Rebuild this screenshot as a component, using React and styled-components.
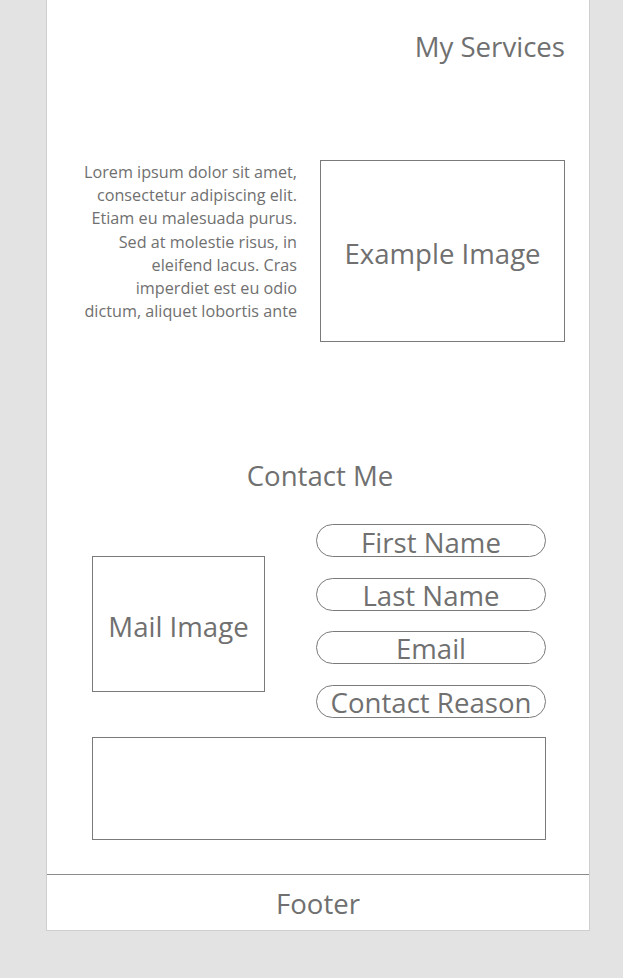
import React from "react";
import styled, { createGlobalStyle } from "styled-components";

const GlobalStyle = createGlobalStyle`
  html, body {
    margin: 0;
    padding: 0;
    background: #e3e3e3;
  }
  body {
    font-family: "Open Sans", "Noto Sans", sans-serif;
    color: #707070;
  }
`;

const Page = styled.div`
  width: 544px;
  margin-left: 46px;
  box-sizing: border-box;
  background: #fff;
  border: 1px solid #cfcfcf;
  border-top: none;
`;

const Header = styled.header`
  display: flex;
  justify-content: flex-end;
  padding: 27px 24px 0 0;
`;

const Heading = styled.h2`
  margin: 0;
  padding-left: ${(p) => p.shift || 0}px;
  font-size: 27.6px;
  font-weight: 400;
  line-height: 38px;
  color: #707070;
  text-align: ${(p) => p.align || "left"};
`;

const Services = styled.section`
  display: flex;
  justify-content: flex-end;
  align-items: flex-start;
  gap: 23px;
  padding: 95px 24px 0 0;
`;

const Blurb = styled.p`
  margin: 0;
  padding-top: 1px;
  font-size: 16.2px;
  line-height: 23.2px;
  text-align: right;
  white-space: nowrap;
  color: #707070;
`;

const Placeholder = styled.div`
  box-sizing: border-box;
  width: ${(p) => p.w}px;
  height: ${(p) => p.h}px;
  margin-top: ${(p) => p.top || 0}px;
  flex-shrink: 0;
  border: 1.5px solid #7a7a7a;
  display: flex;
  align-items: center;
  justify-content: center;
  padding-top: 3px;
  font-size: 27.6px;
  color: #707070;
`;

const Contact = styled.section`
  padding-top: 114px;
`;

const Form = styled.div`
  margin: 30px 43px 0 45px;
  display: flex;
  flex-direction: column;
  gap: 19.5px;
`;

const FormRow = styled.div`
  display: flex;
  justify-content: space-between;
  align-items: flex-start;
`;

const Fields = styled.div`
  display: flex;
  flex-direction: column;
  gap: 20.5px;
`;

const Pill = styled.div`
  box-sizing: border-box;
  width: 230px;
  height: 33px;
  border: 1.5px solid #7a7a7a;
  border-radius: 17px;
  display: flex;
  justify-content: center;
  align-items: flex-start;
  padding-top: ${(p) => p.nudge}px;
  font-size: 27.6px;
  line-height: 33px;
  white-space: nowrap;
  color: #707070;
`;

const Message = styled.div`
  box-sizing: border-box;
  height: 103px;
  border: 1.5px solid #7a7a7a;
`;

const Footer = styled.footer`
  margin-top: 34px;
  border-top: 1.5px solid #8a8a8a;
  height: 55px;
  display: flex;
  align-items: center;
  justify-content: center;
  font-size: 27.6px;
  color: #707070;
`;

const blurb = [
  "Lorem ipsum dolor sit amet,",
  "consectetur adipiscing elit.",
  "Etiam eu malesuada purus.",
  "Sed at molestie risus, in",
  "eleifend lacus. Cras",
  "imperdiet est eu odio",
  "dictum, aliquet lobortis ante",
];

const fields = ["First Name", "Last Name", "Email", "Contact Reason"];

export default function App() {
  return (
    <>
      <GlobalStyle />
      <Page>
        <Header>
          <Heading>My Services</Heading>
        </Header>
        <Services>
          <Blurb>
            {blurb.map((line, i) => (
              <React.Fragment key={i}>
                {line}
                {i < blurb.length - 1 && <br />}
              </React.Fragment>
            ))}
          </Blurb>
          <Placeholder w={245} h={182}>
            Example Image
          </Placeholder>
        </Services>
        <Contact>
          <Heading align="center" shift={4}>
            Contact Me
          </Heading>
          <Form>
            <FormRow>
              <Placeholder w={173} h={136} top={32}>
                Mail Image
              </Placeholder>
              <Fields>
                {fields.map((f, i) => (
                  <Pill key={f} nudge={1 - i * 1.4}>
                    {f}
                  </Pill>
                ))}
              </Fields>
            </FormRow>
            <Message />
          </Form>
        </Contact>
        <Footer>Footer</Footer>
      </Page>
    </>
  );
}
